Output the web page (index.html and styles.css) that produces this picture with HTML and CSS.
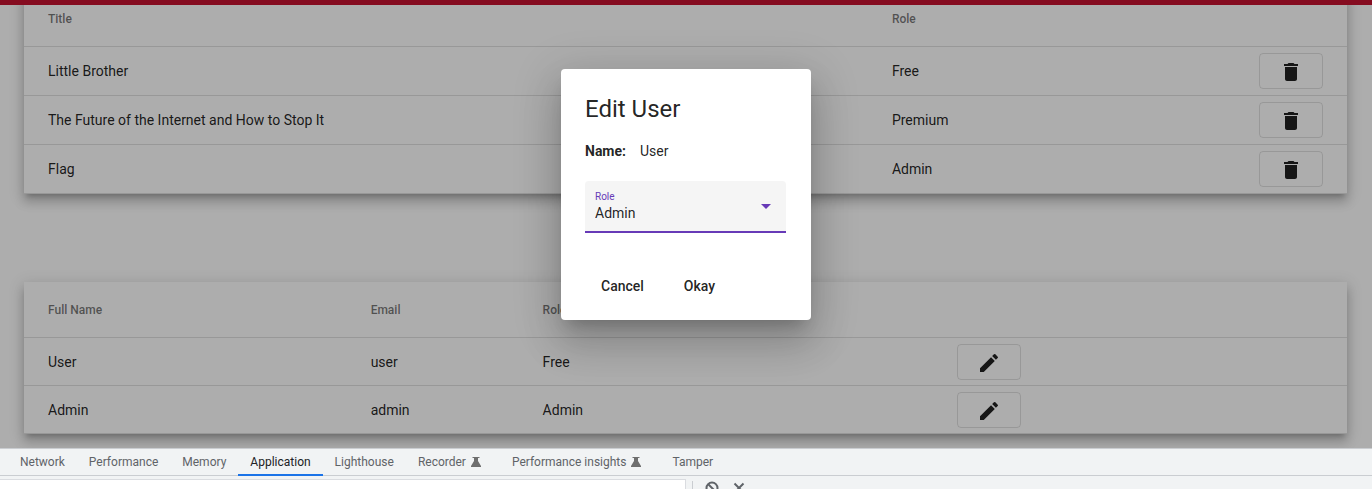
FILE: index.html
```html
<!DOCTYPE html>
<html lang="en">
<head>
<meta charset="utf-8">
<title>Administration</title>
<link rel="stylesheet" href="styles.css">
</head>
<body>
<svg class="sprite" aria-hidden="true">
  <symbol id="trash" viewBox="0 0 24 24"><path d="M6 19c0 1.100.9 2 2 2h8c1.100 0 2-.9 2-2V7H6v12zM19 4h-3.500l-1-1h-5l-1 1H5v2h14V4z"/></symbol>
  <symbol id="pencil" viewBox="0 0 24 24"><path d="M3 17.250V21h3.750L17.810 9.940l-3.750-3.750L3 17.250zM20.710 7.040a1 1 0 0 0 0-1.410l-2.340-2.340a1 1 0 0 0-1.410 0l-1.830 1.830 3.750 3.750 1.830-1.830z"/></symbol>
  <symbol id="flask" viewBox="0 0 10 10"><path d="M1.500 0h7v1H7v3l3 5v1H0V9l3-5V1H1.500z"/></symbol>
</svg>
<div class="viewport">
  <div class="toolbar"></div>
  <main class="content">
    <table class="data-table books">
      <colgroup><col class="c-title"><col class="c-role"><col></colgroup>
      <thead><tr><th>Title</th><th>Role</th><th></th></tr></thead>
      <tbody>
        <tr><td>Little Brother</td><td>Free</td><td class="end"><button class="icon-button" aria-label="Delete Little Brother"><svg><use href="#trash"/></svg></button></td></tr>
        <tr><td>The Future of the Internet and How to Stop It</td><td>Premium</td><td class="end"><button class="icon-button" aria-label="Delete The Future of the Internet"><svg><use href="#trash"/></svg></button></td></tr>
        <tr><td>Flag</td><td>Admin</td><td class="end"><button class="icon-button" aria-label="Delete Flag"><svg><use href="#trash"/></svg></button></td></tr>
      </tbody>
    </table>
    <table class="data-table users">
      <colgroup><col class="c-name"><col class="c-email"><col class="c-level"><col></colgroup>
      <thead><tr><th>Full Name</th><th>Email</th><th>Role</th><th></th></tr></thead>
      <tbody>
        <tr><td>User</td><td>user</td><td>Free</td><td><button class="icon-button" aria-label="Edit User"><svg><use href="#pencil"/></svg></button></td></tr>
        <tr><td>Admin</td><td>admin</td><td>Admin</td><td><button class="icon-button" aria-label="Edit Admin"><svg><use href="#pencil"/></svg></button></td></tr>
      </tbody>
    </table>
  </main>
  <div class="backdrop">
    <section class="dialog" role="dialog" aria-labelledby="dialog-title">
      <h1 id="dialog-title">Edit User</h1>
      <p class="name"><b>Name:</b><span>User</span></p>
      <div class="field">
        <label for="role">Role</label>
        <select id="role"><option>Free</option><option>Premium</option><option selected>Admin</option></select>
      </div>
      <div class="actions"><button>Cancel</button><button>Okay</button></div>
    </section>
  </div>
</div>
<footer class="devtools">
  <nav class="tabs">
    <button>Network</button>
    <button>Performance</button>
    <button>Memory</button>
    <button class="active">Application</button>
    <button>Lighthouse</button>
    <button>Recorder<svg><use href="#flask"/></svg></button>
    <button>Performance insights<svg><use href="#flask"/></svg></button>
    <button>Tamper</button>
  </nav>
  <div class="filter-bar">
    <input type="text" aria-label="Filter">
    <div class="tools">
      <button aria-label="Clear all"><svg viewBox="0 0 14 14"><circle cx="7" cy="7" r="5.500"/><path d="M3 3l8 8"/></svg></button>
      <button aria-label="Delete selected"><svg viewBox="0 0 14 14"><path d="M2.500 2.500l9 9m0-9l-9 9"/></svg></button>
    </div>
  </div>
</footer>
</body>
</html>
```
FILE: styles.css
```css
* { box-sizing: border-box; }
body {
  margin: 0;
  height: 100vh;
  display: flex;
  flex-direction: column;
  overflow: hidden;
  font-family: Roboto, sans-serif;
  font-size: 14px;
  color: rgba(0, 0, 0, .87);
}
button { font: inherit; color: inherit; background: none; border: 0; padding: 0; }
.sprite { position: absolute; width: 0; height: 0; }

.viewport {
  position: relative;
  flex: 1;
  min-height: 0;
  display: flex;
  flex-direction: column;
  overflow: hidden;
  background: #fff;
}
.toolbar { flex: none; height: 5px; background: #c51230; }
.content {
  flex: 1;
  min-height: 0;
  overflow: hidden;
  display: flex;
  flex-direction: column;
  justify-content: flex-end;
  gap: 88px;
  padding: 0 25px 14px 24px;
}

.data-table {
  width: 100%;
  table-layout: fixed;
  border-collapse: separate;
  border-spacing: 0;
  background: #fff;
  box-shadow: 0 5px 5px -3px rgba(0, 0, 0, .2), 0 8px 10px 1px rgba(0, 0, 0, .14), 0 3px 14px 2px rgba(0, 0, 0, .12);
}
.data-table th, .data-table td {
  padding: 0;
  text-align: left;
  border-bottom: 1px solid rgba(0, 0, 0, .12);
}
.data-table th:first-child, .data-table td:first-child { padding-left: 24px; }
.data-table th { height: 56px; font-size: 12px; font-weight: 500; color: rgba(0, 0, 0, .54); }
.data-table td { height: 48px; }
.books td { height: 49px; }
.data-table .end { text-align: right; padding-right: 24px; }
.c-title { width: 65.600%; }
.c-role { width: 15%; }
.c-name { width: 26.200%; }
.c-email { width: 13%; }
.c-level { width: 31.300%; }

.icon-button {
  display: inline-flex;
  align-items: center;
  justify-content: center;
  width: 64px;
  height: 36px;
  padding-top: 2px;
  border: 1px solid rgba(0, 0, 0, .12);
  border-radius: 4px;
  vertical-align: middle;
}
.icon-button svg { width: 24px; height: 24px; fill: currentColor; }

.backdrop {
  position: absolute;
  inset: 0;
  display: flex;
  align-items: flex-start;
  justify-content: center;
  padding-top: 69px;
  background: rgba(0, 0, 0, .32);
}
.dialog {
  width: 250px;
  padding: 24px 24px 16px;
  border-radius: 4px;
  background: #fff;
  box-shadow: 0 11px 15px -7px rgba(0, 0, 0, .2), 0 24px 38px 3px rgba(0, 0, 0, .14), 0 9px 46px 8px rgba(0, 0, 0, .12);
}
.dialog h1 { margin: 0 0 16px; font-size: 24px; line-height: 32px; font-weight: 400; }
.name { margin: 0 0 20px; display: flex; gap: 14px; line-height: 20px; }
.field {
  position: relative;
  width: 201px;
  height: 52px;
  padding: 9px 10px 0;
  display: flex;
  flex-direction: column;
  border-bottom: 2px solid #673ab7;
  border-radius: 4px 4px 0 0;
  background: #f5f5f5;
}
.field::after {
  content: "";
  position: absolute;
  top: 23px;
  right: 15px;
  border: 5px solid transparent;
  border-top-color: #673ab7;
  border-bottom: 0;
  pointer-events: none;
}
.field label { font-size: 10px; line-height: 13px; color: #673ab7; }
.field select {
  appearance: none;
  width: 100%;
  height: 20px;
  padding: 0;
  border: 0;
  outline: 0;
  background: none;
  font: inherit;
  color: inherit;
}
.actions { display: flex; gap: 8px; padding-top: 35px; }
.actions button { padding: 0 16px; height: 36px; font-weight: 500; }

.devtools {
  flex: none;
  height: 41px;
  overflow: hidden;
  border-top: 1px solid #cacdd1;
  background: #f1f3f4;
  color: #5f6368;
  font-size: 12px;
}
.tabs { display: flex; height: 27px; padding-left: 8px; border-bottom: 1px solid #cacdd1; }
.tabs button {
  height: 27px;
  padding: 0 12px;
  display: flex;
  align-items: center;
  gap: 5px;
  border-bottom: 2px solid transparent;
}
.tabs .active { color: #202124; border-bottom-color: #1a73e8; }
.tabs svg { width: 10px; height: 10px; margin-right: 7px; fill: #6e6e6e; }
.filter-bar { display: flex; padding-top: 3px; }
.filter-bar input { width: 50%; height: 24px; border: 1px solid #dadce0; border-left: 0; background: #fff; }
.tools { display: flex; gap: 13px; margin: 2px 0 0 6px; padding-left: 12px; border-left: 1px solid #cacdd1; }
.tools button { height: 14px; }
.tools svg { display: block; width: 14px; height: 14px; fill: none; stroke: #5f6368; stroke-width: 2; }
```
